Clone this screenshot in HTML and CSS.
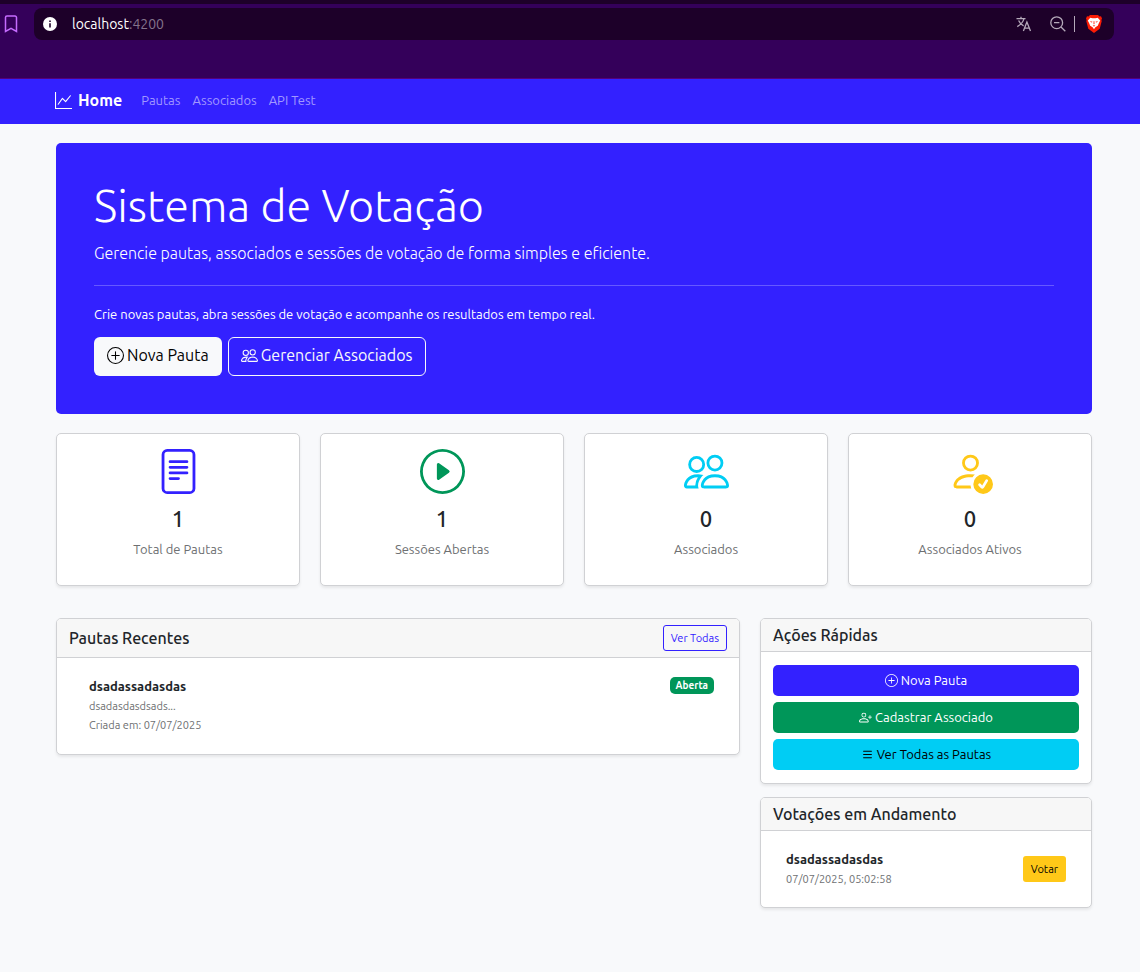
FILE: index.html
```html
<!DOCTYPE html>
<html lang="pt-BR">
<head>
<meta charset="utf-8">
<meta name="viewport" content="width=device-width, initial-scale=1">
<title>Sistema de Votação</title>
<link rel="stylesheet" href="styles.css">
</head>
<body>
<svg class="sprite" aria-hidden="true">
  <symbol id="i-graph" viewBox="0 0 16 16"><path fill-rule="evenodd" d="M0 0h1v15h15v1H0zm14.817 3.113a.5.5 0 0 1 .07.704l-4.5 5.5a.5.5 0 0 1-.74.037L7.06 6.767l-3.656 5.027a.5.5 0 0 1-.808-.588l4-5.5a.5.5 0 0 1 .758-.06l2.609 2.61 4.15-5.073a.5.5 0 0 1 .704-.07"/></symbol>
  <symbol id="i-plus" viewBox="0 0 16 16"><path d="M8 15A7 7 0 1 1 8 1a7 7 0 0 1 0 14m0 1A8 8 0 1 0 8 0a8 8 0 0 0 0 16"/><path d="M8 4a.5.5 0 0 1 .5.5v3h3a.5.5 0 0 1 0 1h-3v3a.5.5 0 0 1-1 0v-3h-3a.5.5 0 0 1 0-1h3v-3A.5.5 0 0 1 8 4"/></symbol>
  <symbol id="i-people" viewBox="0 0 16 16"><path d="M15 14s1 0 1-1-1-4-5-4-5 3-5 4 1 1 1 1zm-7.978-1L7 12.996c.001-.264.167-1.03.76-1.72C8.312 10.629 9.282 10 11 10c1.717 0 2.687.63 3.24 1.276.593.69.758 1.457.76 1.72l-.008.002-.014.002zM11 7a2 2 0 1 0 0-4 2 2 0 0 0 0 4m3-2a3 3 0 1 1-6 0 3 3 0 0 1 6 0M6.936 9.28a6 6 0 0 0-1.23-.247A7 7 0 0 0 5 9c-4 0-5 3-5 4q0 1 1 1h4.216A2.24 2.24 0 0 1 5 13c0-1.01.377-2.042 1.09-2.904.243-.294.526-.569.846-.816M4.92 10A5.5 5.5 0 0 0 4 13H1c0-.26.164-1.03.76-1.724.545-.636 1.492-1.256 3.16-1.275ZM1.5 5.5a3 3 0 1 1 6 0 3 3 0 0 1-6 0m3-2a2 2 0 1 0 0 4 2 2 0 0 0 0-4"/></symbol>
  <symbol id="i-file" viewBox="0 0 16 16"><path d="M5 4a.5.5 0 0 0 0 1h6a.5.5 0 0 0 0-1zm-.5 2.5A.5.5 0 0 1 5 6h6a.5.5 0 0 1 0 1H5a.5.5 0 0 1-.5-.5M5 8a.5.5 0 0 0 0 1h6a.5.5 0 0 0 0-1zm0 2a.5.5 0 0 0 0 1h3a.5.5 0 0 0 0-1z"/><path d="M2 2a2 2 0 0 1 2-2h8a2 2 0 0 1 2 2v12a2 2 0 0 1-2 2H4a2 2 0 0 1-2-2zm10-1H4a1 1 0 0 0-1 1v12a1 1 0 0 0 1 1h8a1 1 0 0 0 1-1V2a1 1 0 0 0-1-1"/></symbol>
  <symbol id="i-play" viewBox="0 0 16 16"><path d="M8 15A7 7 0 1 1 8 1a7 7 0 0 1 0 14m0 1A8 8 0 1 0 8 0a8 8 0 0 0 0 16"/><path d="M6.271 5.055a.5.5 0 0 1 .52.038l3.5 2.5a.5.5 0 0 1 0 .814l-3.5 2.5A.5.5 0 0 1 6 10.5v-5a.5.5 0 0 1 .271-.445"/></symbol>
  <symbol id="i-check" viewBox="0 0 16 16"><path d="M12.5 16a3.5 3.5 0 1 0 0-7 3.5 3.5 0 0 0 0 7m1.679-4.493-1.335 2.226a.75.75 0 0 1-1.174.144l-.774-.773a.5.5 0 0 1 .708-.708l.547.548 1.17-1.951a.5.5 0 1 1 .858.514M11 5a3 3 0 1 1-6 0 3 3 0 0 1 6 0M8 7a2 2 0 1 0 0-4 2 2 0 0 0 0 4"/><path d="M8.256 14a4.5 4.5 0 0 1-.229-1.004H3c.001-.246.154-.986.832-1.664C4.484 10.68 5.711 10 8 10q.39 0 .74.025c.226-.341.496-.65.804-.918Q8.844 9.002 8 9c-5 0-6 3-6 4s1 1 1 1z"/></symbol>
  <symbol id="i-person-plus" viewBox="0 0 16 16"><path d="M6 8a3 3 0 1 0 0-6 3 3 0 0 0 0 6m2-3a2 2 0 1 1-4 0 2 2 0 0 1 4 0m4 8c0 1-1 1-1 1H1s-1 0-1-1 1-4 6-4 6 3 6 4m-1-.004c-.001-.246-.154-.986-.832-1.664C9.516 10.68 8.289 10 6 10s-3.516.68-4.168 1.332c-.678.678-.83 1.418-.832 1.664z"/><path fill-rule="evenodd" d="M13.5 5a.5.5 0 0 1 .5.5V7h1.5a.5.5 0 0 1 0 1H14v1.5a.5.5 0 0 1-1 0V8h-1.5a.5.5 0 0 1 0-1H13V5.5a.5.5 0 0 1 .5-.5"/></symbol>
  <symbol id="i-list" viewBox="0 0 16 16"><path fill-rule="evenodd" d="M2.500 12a.5.5 0 0 1 .5-.5h10a.5.5 0 0 1 0 1H3a.5.5 0 0 1-.5-.5m0-4a.5.5 0 0 1 .5-.5h10a.5.5 0 0 1 0 1H3a.5.5 0 0 1-.5-.5m0-4a.5.5 0 0 1 .5-.5h10a.5.5 0 0 1 0 1H3a.5.5 0 0 1-.5-.5"/></symbol>
</svg>

<header class="browser">
  <div class="browser-row">
    <button class="tool" aria-label="Favoritar"><svg class="bookmark" viewBox="0 0 14 18"><path d="M1.500 2.500a1.500 1.500 0 0 1 1.500-1.500h8a1.500 1.500 0 0 1 1.500 1.500V16.500L7 13.300 1.500 16.500z"/></svg></button>
    <div class="address">
      <svg class="info" viewBox="0 0 14 14"><circle cx="7" cy="7" r="7" fill="#fff"/><path d="M6.200 6.200h1.600v4.300H6.200zM6.200 3.500h1.600v1.600H6.200z" fill="#1d0029"/></svg>
      <span class="url">localhost<span class="port">:4200</span></span>
      <button class="tool translate-btn" aria-label="Traduzir"><svg class="translate" viewBox="0 0 16 16"><path d="M.5 2.700h9M5 .8v1.900M8 2.700C7.300 5.500 4.500 8.800 1.300 10.600M2.600 4.400C3.700 7 5.500 8.700 7.600 9.800M7.400 15l3.500-9 3.600 9M8.600 12.200h4.700"/></svg></button>
      <button class="tool" aria-label="Zoom"><svg class="zoom" viewBox="0 0 16 16"><circle cx="6.700" cy="6.700" r="5.900"/><path d="M11 11l4.300 4.300M4 6.700h5.400"/></svg></button>
      <span class="divider"></span>
      <button class="tool" aria-label="Brave Shields"><svg class="brave" viewBox="0 0 16 18"><path fill="#fb1c05" d="M4 0h8l1.500 1.500L15 1.300l1 2.200-.6 1.400.3 1.300-2 7.600L8 18l-5.700-4.200-2-7.600.3-1.300L0 3.500l1-2.200 1.500.2z"/><path fill="#fff" d="M4.300 2.700l2.200.5h3l2.200-.5 2.500 2.900-1.600 3.200-.8 1.900-2.400 1.500L8 14.200l-1.400-2-2.400-1.500-.8-1.900-1.600-3.200z"/><path fill="#fb1c05" d="M4.200 6.200l2.300.5-.6.700-1.300-.4zM11.800 6.200l-2.300.5.6.7 1.300-.4zM7.700 6h.6l.2 2.800-.5.600-.5-.6zM6.600 10.700l1.400-.5 1.400.5-1.400.7z"/></svg></button>
    </div>
  </div>
</header>

<nav class="navbar">
  <a class="brand" href="#"><svg class="icon"><use href="#i-graph"/></svg>Home</a>
  <a class="nav-link" href="#">Pautas</a>
  <a class="nav-link" href="#">Associados</a>
  <a class="nav-link" href="#">API Test</a>
</nav>

<main class="page">
  <section class="hero">
    <h1 class="hero-title">Sistema de Votação</h1>
    <p class="lead">Gerencie pautas, associados e sessões de votação de forma simples e eficiente.</p>
    <hr class="rule">
    <p class="hero-text">Crie novas pautas, abra sessões de votação e acompanhe os resultados em tempo real.</p>
    <div class="hero-actions">
      <button class="btn btn-lg btn-light"><svg class="icon"><use href="#i-plus"/></svg>Nova Pauta</button>
      <button class="btn btn-lg btn-outline-light"><svg class="icon"><use href="#i-people"/></svg>Gerenciar Associados</button>
    </div>
  </section>

  <section class="stats">
    <article class="card stat"><svg class="stat-icon primary"><use href="#i-file"/></svg><h2 class="stat-value">1</h2><p class="stat-label">Total de Pautas</p></article>
    <article class="card stat"><svg class="stat-icon success"><use href="#i-play"/></svg><h2 class="stat-value">1</h2><p class="stat-label">Sessões Abertas</p></article>
    <article class="card stat"><svg class="stat-icon info-color"><use href="#i-people"/></svg><h2 class="stat-value">0</h2><p class="stat-label">Associados</p></article>
    <article class="card stat"><svg class="stat-icon warning"><use href="#i-check"/></svg><h2 class="stat-value">0</h2><p class="stat-label">Associados Ativos</p></article>
  </section>

  <div class="columns">
    <section class="card recent">
      <header class="card-header with-action"><h2 class="card-title">Pautas Recentes</h2><button class="btn btn-sm btn-outline-primary">Ver Todas</button></header>
      <div class="list-item">
        <div>
          <h3 class="item-title">dsadassadasdas</h3>
          <p class="item-text">dsadasdasdsads...</p>
          <p class="item-text">Criada em: 07/07/2025</p>
        </div>
        <span class="badge">Aberta</span>
      </div>
    </section>

    <div class="side">
      <section class="card">
        <header class="card-header"><h2 class="card-title">Ações Rápidas</h2></header>
        <div class="actions">
          <button class="btn btn-primary"><svg class="icon"><use href="#i-plus"/></svg>Nova Pauta</button>
          <button class="btn btn-success"><svg class="icon"><use href="#i-person-plus"/></svg>Cadastrar Associado</button>
          <button class="btn btn-info"><svg class="icon"><use href="#i-list"/></svg>Ver Todas as Pautas</button>
        </div>
      </section>
      <section class="card">
        <header class="card-header"><h2 class="card-title">Votações em Andamento</h2></header>
        <div class="list-item vote">
          <div>
            <h3 class="item-title">dsadassadasdas</h3>
            <p class="item-text">07/07/2025, 05:02:58</p>
          </div>
          <button class="btn btn-sm btn-warning">Votar</button>
        </div>
      </section>
    </div>
  </div>
</main>
</body>
</html>
```
FILE: styles.css
```css
* { box-sizing: border-box; }

body {
  margin: 0;
  background: #f8f9fb;
  color: #212529;
  font-family: Ubuntu, "Noto Sans", "Open Sans", sans-serif;
  font-size: 13px;
  line-height: 20px;
}

h1, h2, h3, p { margin: 0; }
button { font: inherit; cursor: pointer; }
a { text-decoration: none; }
.sprite { display: none; }
.icon { width: 1em; height: 1em; fill: currentColor; flex: none; }

/* Browser bar */
.browser {
  height: 79px;
  padding-top: 4px;
  background: #34005a;
  border-top: 4px solid #1d0029;
  border-bottom: 1px solid #55007c;
}
.browser-row { display: flex; align-items: center; gap: 16px; padding: 0 26px 0 4px; }
.tool { display: flex; padding: 0; border: 0; background: none; }
.tool svg { fill: none; stroke: #b5a9ba; stroke-width: 1.3; }
.tool .bookmark { width: 14px; height: 18px; stroke: #c56bff; stroke-width: 1.5; }
.address {
  flex: 1;
  display: flex;
  align-items: center;
  height: 32px;
  padding: 0 12px 0 9px;
  border-radius: 8px;
  background: #1d0029;
}
.info { width: 14px; height: 14px; margin-right: 15px; }
.url { color: #fff; font-size: 14px; }
.port { color: #84748c; }
.translate-btn { margin-left: auto; margin-right: 18px; }
.tool .translate, .tool .zoom { width: 16px; height: 16px; }
.divider { width: 1px; height: 16px; margin: 0 11px 0 8px; background: #b5a9ba; }
.tool .brave { width: 16px; height: 18px; stroke: none; }

/* Navigation */
.navbar {
  display: flex;
  align-items: center;
  gap: 12px;
  height: 45px;
  padding: 0 48px 3px 55px;
  background: #3321ff;
}
.brand {
  display: flex;
  align-items: center;
  gap: 6px;
  margin-right: 7px;
  color: #fff;
  font-size: 16px;
  font-weight: 700;
}
.brand .icon { width: 17px; height: 17px; }
.nav-link { color: #a198ff; }

.page { padding: 19px 48px 64px 56px; }

/* Hero */
.hero {
  padding: 38px;
  border-radius: 5px;
  background: #3321ff;
  color: #fff;
}
.hero-title {
  margin-bottom: 10px;
  font-size: 45px;
  font-weight: 300;
  line-height: 50px;
}
.lead { font-size: 16px; font-weight: 300; line-height: 24px; }
.rule { margin: 20px 0 18px; border: 0; border-top: 1px solid #6659ff; }
.hero-actions { display: flex; flex-wrap: wrap; gap: 6px; margin-top: 13px; }

/* Buttons */
.btn {
  display: inline-flex;
  align-items: center;
  justify-content: center;
  gap: 3px;
  padding: 4px 10px;
  border: 1px solid transparent;
  border-radius: 5px;
  line-height: 21px;
}
.btn-lg {
  padding: 5px 12px 7px;
  border-radius: 6px;
  font-size: 16px;
  line-height: 25px;
}
.btn-lg .icon { width: 17px; height: 17px; }
.btn-sm { padding: 3px 7px; border-radius: 3px; font-size: 11px; line-height: 18px; }
.btn-light { background: #f8f9fb; color: #000; }
.btn-outline-light { background: none; border-color: #f8f9fb; color: #f8f9fb; }
.btn-outline-primary { background: none; border-color: #3321ff; color: #3321ff; }
.btn-primary { background: #3321ff; color: #fff; }
.btn-success { background: #009659; color: #fff; }
.btn-info { background: #00cdf4; color: #000; }
.btn-warning { background: #ffc818; color: #000; }

/* Cards */
.card {
  overflow: hidden;
  border: 1px solid #d0d1d4;
  border-radius: 5px;
  background: #fff;
  box-shadow: 0 2px 3px rgba(0, 0, 0, .075);
}
.stats {
  display: grid;
  grid-template-columns: repeat(4, 1fr);
  gap: 20px;
  margin: 19px 0 32px;
}
.stat { padding: 15px 12px 26px; text-align: center; }
.stat-icon { display: block; width: 45px; height: 45px; margin: 0 auto 11px; fill: currentColor; }
.primary { color: #3321ff; }
.success { color: #009659; }
.info-color { color: #00cdf4; }
.warning { color: #ffc818; }
.stat-value { margin-bottom: 7px; font-size: 22px; font-weight: 500; line-height: 27px; }
.stat-label { color: #6e7072; }

.columns {
  display: grid;
  grid-template-columns: repeat(12, 1fr);
  gap: 20px;
  align-items: start;
}
.recent { grid-column: span 8; }
.side { grid-column: span 4; display: grid; gap: 13px; }

.card-header {
  padding: 6px 12px;
  border-bottom: 1px solid #d0d1d4;
  background: #f7f7f7;
}
.with-action { display: flex; align-items: center; justify-content: space-between; }
.card-title { font-size: 16px; font-weight: 500; line-height: 20px; }
.list-item {
  display: flex;
  align-items: flex-start;
  justify-content: space-between;
  padding: 18px 25px 19px 32px;
}
.vote { align-items: center; padding: 18px 25px; }
.item-title { margin-bottom: 1px; font-size: 13px; font-weight: 700; line-height: 20px; }
.item-text { color: #6e7072; font-size: 11px; line-height: 19px; }
.badge {
  margin-top: 1px;
  padding: 0 6px;
  border-radius: 5px;
  background: #009659;
  color: #fff;
  font-size: 10px;
  font-weight: 700;
  line-height: 17px;
}
.actions { display: grid; gap: 6px; padding: 13px 12px; }
```
